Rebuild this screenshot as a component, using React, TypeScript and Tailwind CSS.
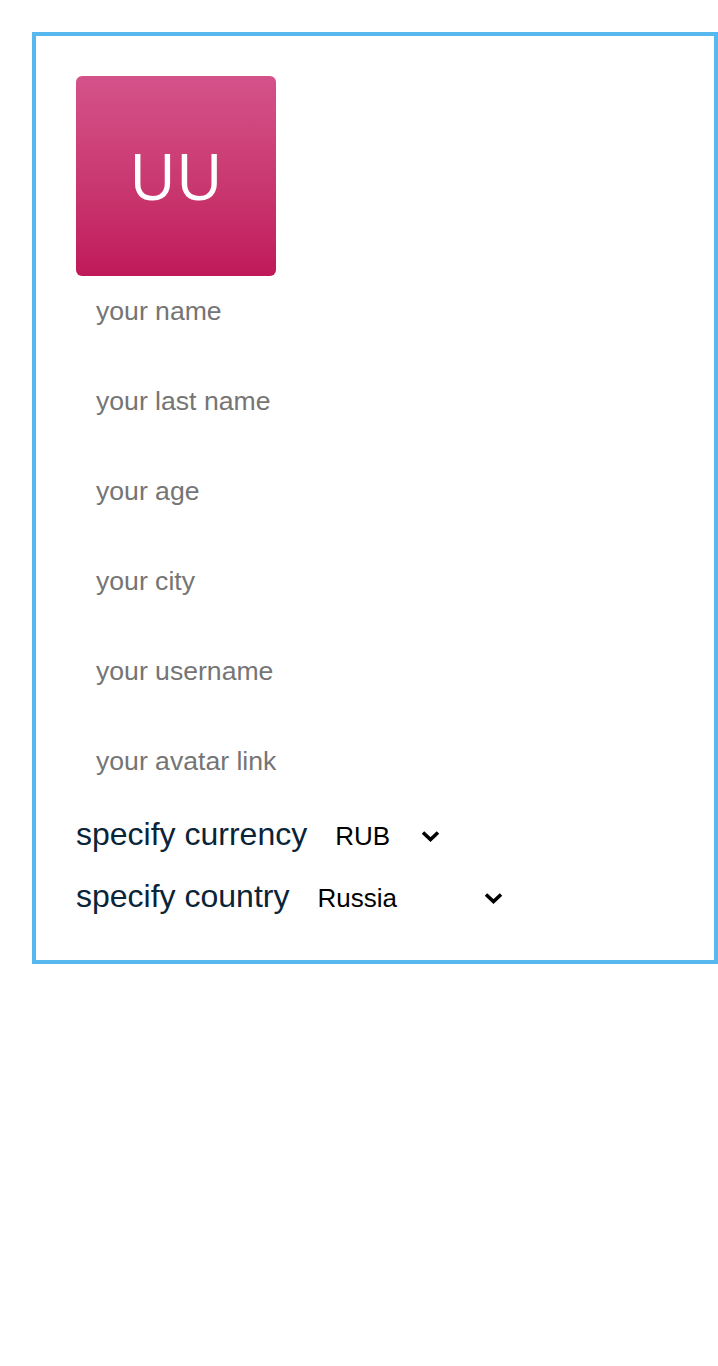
const fields = [
  "your name",
  "your last name",
  "your age",
  "your city",
  "your username",
  "your avatar link",
];

const Chevron: React.FC = () => (
  <svg
    width="19"
    height="12"
    viewBox="0 0 19 12"
    className="pointer-events-none absolute right-0 top-1/2 -translate-y-1/2"
  >
    <path
      d="M2 2.5 L9.5 9.5 L17 2.5"
      fill="none"
      stroke="#000"
      strokeWidth="3.6"
      strokeLinecap="butt"
      strokeLinejoin="miter"
    />
  </svg>
);

const Picker: React.FC<{ value: string; options: string[]; width: string }> = ({
  value,
  options,
  width,
}) => (
  <div className={`relative ml-[28px] mt-1 ${width}`}>
    <select
      defaultValue={value}
      className="w-full appearance-none bg-transparent p-0 text-[26px] leading-[30px] text-black outline-none"
    >
      {options.map((o) => (
        <option key={o}>{o}</option>
      ))}
    </select>
    <Chevron />
  </div>
);

export default function App() {
  return (
    <div className="min-h-[1366px] bg-white font-['Liberation_Sans',Arial,sans-serif]">
      <section className="ml-8 mt-8 flex flex-col border-4 border-[#56b8ef] px-10 pt-10 pb-[33px]">
        <div className="flex h-[200px] w-[200px] items-center justify-center rounded-md bg-gradient-to-b from-[#d4528a] to-[#c0185a]">
          <span className="font-['Open_Sans',sans-serif] text-[64px] leading-none text-white">
            UU
          </span>
        </div>
        <div className="mt-[2px] flex flex-col gap-6">
          {fields.map((f) => (
            <input
              key={f}
              placeholder={f}
              className="h-[66px] bg-transparent px-5 text-[26.6px] text-black outline-none placeholder:text-[#757575]"
            />
          ))}
        </div>
        <div className="mt-[9px] flex flex-col">
          <label className="flex h-[62px] items-center">
            <span className="text-[32px] text-[#0a2438]">specify currency</span>
            <Picker value="RUB" options={["RUB", "USD", "EUR"]} width="w-[105px]" />
          </label>
          <label className="flex h-[62px] items-center">
            <span className="text-[32px] text-[#0a2438]">specify country</span>
            <Picker
              value="Russia"
              options={["Russia", "Belarus", "Kazakhstan", "Ukraine"]}
              width="w-[186px]"
            />
          </label>
        </div>
      </section>
    </div>
  );
}
